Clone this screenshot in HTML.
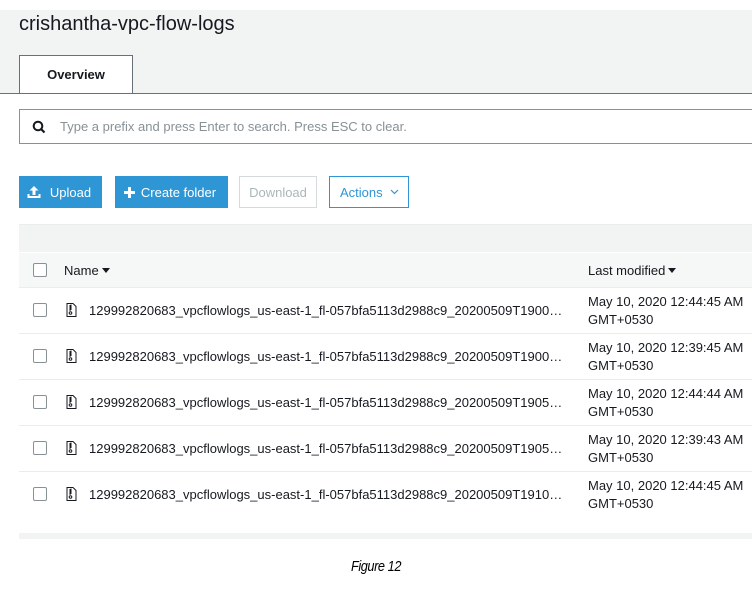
<!DOCTYPE html>
<html><head><meta charset="utf-8"><style>
*{margin:0;padding:0;box-sizing:border-box}
body{width:752px;height:604px;background:#fff;font-family:"Liberation Sans",sans-serif;color:#16191f;position:relative;overflow:hidden}
.abs{position:absolute}
.hdr{left:0;top:10px;width:752px;height:83px;background:#f2f3f3}
h1{position:absolute;left:19px;top:13px;font-size:20px;font-weight:normal;color:#16191f}
.tab{left:19px;top:55px;width:114px;height:39px;background:#fff;border:1px solid #687078;border-bottom:none;font-size:13px;font-weight:bold;text-align:center;line-height:38px}
.line{left:0;top:93px;width:752px;height:1px;background:#687078}
.search{left:19px;top:109px;width:740px;height:35px;border:1px solid #879196;font-size:13px;color:#879196;line-height:33px;padding-left:40px}
.btn{top:176px;height:32px;font-size:13px;line-height:34px;text-align:center}
.blue{background:#2f96d6;color:#fff}
.tbar{left:19px;top:224px;width:733px;height:29px;background:#f2f3f3;border-top:1px solid #eaeded}
.thead{left:19px;top:252px;width:733px;height:36px;background:#f6f7f7;border-top:1px solid #fff;border-bottom:1px solid #eaeded;font-size:13px}
.cb{width:14px;height:14px;border:1px solid #879196;border-radius:2px;background:#fff}
.row{left:19px;width:733px;height:46px;border-bottom:1px solid #eaeded;font-size:13px}
.fn{left:70px;top:15px;color:#16191f;white-space:nowrap}
.dt{left:569px;top:5px;line-height:18px}
.caret{display:inline-block;width:0;height:0;border-left:4px solid transparent;border-right:4px solid transparent;border-top:5px solid #16191f;vertical-align:2px;margin-left:3px}
</style></head><body>
<div class="abs hdr"></div>
<h1>crishantha-vpc-flow-logs</h1>
<div class="abs tab">Overview</div>
<div class="abs line"></div>
<div class="abs search">Type a prefix and press Enter to search. Press ESC to clear.
<svg class="abs" style="left:12px;top:10px" width="14" height="14" viewBox="0 0 14 14"><circle cx="6" cy="6" r="4.3" fill="none" stroke="#16191f" stroke-width="2"/><path d="M9 9l3.5 3.5" stroke="#16191f" stroke-width="2.2"/></svg></div>

<div class="abs btn blue" style="left:19px;width:83px;padding-left:20px">Upload
<svg class="abs" style="left:8px;top:9px" width="14" height="14" viewBox="0 0 14 14"><path d="M7 1L2.5 5.5h3V10h3V5.5h3z" fill="#fff"/><path d="M0.5 9v4h13V9h-2v2h-9V9z" fill="#fff"/></svg></div>
<div class="abs btn blue" style="left:115px;width:113px;padding-left:14px">Create folder
<svg class="abs" style="left:9px;top:11px" width="11" height="11" viewBox="0 0 11 11"><path d="M4 0h3v4h4v3H7v4H4V7H0V4h4z" fill="#fff"/></svg></div>
<div class="abs btn" style="left:239px;width:78px;border:1px solid #d5dbdb;color:#aab7b8;line-height:32px">Download</div>
<div class="abs btn" style="left:329px;width:80px;border:1px solid #2f96d6;color:#2f96d6;line-height:32px;text-align:left;padding-left:10px">Actions
<svg class="abs" style="left:60px;top:12px" width="9" height="6" viewBox="0 0 9 6"><path d="M1 1l3.5 3.5L8 1" fill="none" stroke="#2f96d6" stroke-width="1.2"/></svg></div>

<div class="abs tbar"></div>
<div class="abs thead">
<div class="abs cb" style="left:14px;top:10px"></div>
<div class="abs" style="left:45px;top:10px">Name<span class="caret"></span></div>
<div class="abs" style="left:569px;top:10px">Last modified<span class="caret"></span></div>
</div>

<div class="abs row" style="top:288px"><div class="abs cb" style="left:14px;top:15px"></div><svg class="abs" style="left:47px;top:15px" width="11" height="14" viewBox="0 0 11 14"><path d="M1 .5h6l3 3v10H1z" fill="none" stroke="#16191f"/><path d="M5 1.5v1h-1v1h1v1h-1v1h1v1h-1v1.5" stroke="#16191f" fill="none"/><circle cx="4.5" cy="10" r="1.3" fill="none" stroke="#16191f"/></svg><div class="abs fn">129992820683_vpcflowlogs_us-east-1_fl-057bfa5113d2988c9_20200509T1900…</div><div class="abs dt">May 10, 2020 12:44:45 AM<br>GMT+0530</div></div>
<div class="abs row" style="top:334px"><div class="abs cb" style="left:14px;top:15px"></div><svg class="abs" style="left:47px;top:15px" width="11" height="14" viewBox="0 0 11 14"><path d="M1 .5h6l3 3v10H1z" fill="none" stroke="#16191f"/><path d="M5 1.5v1h-1v1h1v1h-1v1h1v1h-1v1.5" stroke="#16191f" fill="none"/><circle cx="4.5" cy="10" r="1.3" fill="none" stroke="#16191f"/></svg><div class="abs fn">129992820683_vpcflowlogs_us-east-1_fl-057bfa5113d2988c9_20200509T1900…</div><div class="abs dt">May 10, 2020 12:39:45 AM<br>GMT+0530</div></div>
<div class="abs row" style="top:380px"><div class="abs cb" style="left:14px;top:15px"></div><svg class="abs" style="left:47px;top:15px" width="11" height="14" viewBox="0 0 11 14"><path d="M1 .5h6l3 3v10H1z" fill="none" stroke="#16191f"/><path d="M5 1.5v1h-1v1h1v1h-1v1h1v1h-1v1.5" stroke="#16191f" fill="none"/><circle cx="4.5" cy="10" r="1.3" fill="none" stroke="#16191f"/></svg><div class="abs fn">129992820683_vpcflowlogs_us-east-1_fl-057bfa5113d2988c9_20200509T1905…</div><div class="abs dt">May 10, 2020 12:44:44 AM<br>GMT+0530</div></div>
<div class="abs row" style="top:426px"><div class="abs cb" style="left:14px;top:15px"></div><svg class="abs" style="left:47px;top:15px" width="11" height="14" viewBox="0 0 11 14"><path d="M1 .5h6l3 3v10H1z" fill="none" stroke="#16191f"/><path d="M5 1.5v1h-1v1h1v1h-1v1h1v1h-1v1.5" stroke="#16191f" fill="none"/><circle cx="4.5" cy="10" r="1.3" fill="none" stroke="#16191f"/></svg><div class="abs fn">129992820683_vpcflowlogs_us-east-1_fl-057bfa5113d2988c9_20200509T1905…</div><div class="abs dt">May 10, 2020 12:39:43 AM<br>GMT+0530</div></div>
<div class="abs row" style="top:472px;border-bottom:none"><div class="abs cb" style="left:14px;top:15px"></div><svg class="abs" style="left:47px;top:15px" width="11" height="14" viewBox="0 0 11 14"><path d="M1 .5h6l3 3v10H1z" fill="none" stroke="#16191f"/><path d="M5 1.5v1h-1v1h1v1h-1v1h1v1h-1v1.5" stroke="#16191f" fill="none"/><circle cx="4.5" cy="10" r="1.3" fill="none" stroke="#16191f"/></svg><div class="abs fn">129992820683_vpcflowlogs_us-east-1_fl-057bfa5113d2988c9_20200509T1910…</div><div class="abs dt">May 10, 2020 12:44:45 AM<br>GMT+0530</div></div>

<div class="abs" style="left:19px;top:533px;width:733px;height:6px;background:#f2f3f3"></div>
<div class="abs" style="left:0;width:752px;top:558px;text-align:center;font-size:15px;font-style:italic;color:#000;letter-spacing:-0.5px;transform:scaleX(0.85)">Figure 12</div>
</body></html>
